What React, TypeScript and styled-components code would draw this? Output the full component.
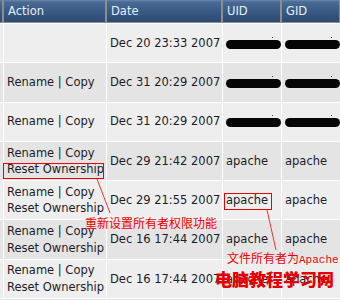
import React from "react";
import styled, { createGlobalStyle } from "styled-components";

const Global = createGlobalStyle`
  html, body { margin: 0; padding: 0; background: #ffffff; }
  body { width: 340px; height: 300px; overflow: hidden; }
`;

const Page = styled.div`
  position: relative;
  width: 340px;
  height: 300px;
  overflow: hidden;
  background: #ffffff;
  font-family: "DejaVu Sans", Verdana, sans-serif;
`;

const Table = styled.table`
  border-collapse: separate;
  border-spacing: 0;
  table-layout: fixed;
  width: 340px;
  font-size: 11.5px;
`;

const HeadCell = styled.th<{ $edge?: boolean }>`
  height: 22px;
  padding: 0 0 0 4px;
  text-align: left;
  font-weight: normal;
  color: #e6eef8;
  background: linear-gradient(#6a88ad 0px, #4a6b94 2px, #3b5c86 45%, #2c4b73 100%);
  border: 1px solid #8d8d8d;
  border-top: none;
  border-left: ${(p) => (p.$edge ? "none" : "1px solid #8d8d8d")};
  white-space: nowrap;
  overflow: hidden;
`;

const Row = styled.tr<{ $alt: boolean }>`
  background: ${(p) => (p.$alt ? "#e4e4e4" : "#eeeeee")};
`;

const Cell = styled.td<{ $edge?: boolean }>`
  height: 38.3px;
  padding: 0 0 0 3px;
  border-top: 1px solid #ffffff;
  border-left: ${(p) => (p.$edge ? "none" : "1px solid #ffffff")};
  color: #1c1c28;
  line-height: 16.5px;
  white-space: nowrap;
  overflow: hidden;
  vertical-align: middle;
`;

const Blob = styled.div`
  position: relative;
  width: 55px;
  height: 9px;
  border-radius: 5px;
  background: #050505;
  margin-top: 2px;
  &::after {
    content: "";
    position: absolute;
    right: 8px;
    top: -3px;
    width: 1px;
    height: 1px;
    background: #6a1a6a;
  }
`;

const Overlay = styled.svg`
  position: absolute;
  left: 0;
  top: 0;
  pointer-events: none;
`;

const Note = styled.div<{ $x: number; $y: number }>`
  position: absolute;
  left: ${(p) => p.$x}px;
  top: ${(p) => p.$y}px;
  color: #ee0000;
  font-size: 12px;
  line-height: 14px;
  white-space: nowrap;
  font-family: "Noto Sans CJK SC", sans-serif;
`;

const Mono = styled.span`
  font-family: "Liberation Mono", monospace;
  font-size: 11px;
`;

const Watermark = styled.div`
  position: absolute;
  left: 215px;
  top: 268px;
  color: #e60000;
  font-size: 17px;
  line-height: 22px;
  font-weight: 900;
  white-space: nowrap;
  font-family: "Noto Sans CJK SC", sans-serif;
`;

type RowData = { actions: number; date: string; owner: "blob" | "apache" | "none" };

const rows: RowData[] = [
  { actions: 0, date: "Dec 20 23:33 2007", owner: "blob" },
  { actions: 1, date: "Dec 31 20:29 2007", owner: "blob" },
  { actions: 1, date: "Dec 31 20:29 2007", owner: "blob" },
  { actions: 2, date: "Dec 29 21:42 2007", owner: "apache" },
  { actions: 2, date: "Dec 29 21:55 2007", owner: "apache" },
  { actions: 2, date: "Dec 16 17:44 2007", owner: "apache" },
  { actions: 2, date: "Dec 16 17:44 2007", owner: "apache" },
  { actions: 0, date: "", owner: "none" },
];

function Owner({ kind }: { kind: RowData["owner"] }) {
  if (kind === "blob") return <Blob />;
  if (kind === "apache") return <>apache</>;
  return null;
}

export default function App() {
  return (
    <Page>
      <Global />
      <Table>
        <colgroup>
          <col style={{ width: 3 }} />
          <col style={{ width: 103 }} />
          <col style={{ width: 116 }} />
          <col style={{ width: 59 }} />
          <col style={{ width: 59 }} />
        </colgroup>
        <thead>
          <tr>
            <HeadCell $edge />
            <HeadCell>Action</HeadCell>
            <HeadCell>Date</HeadCell>
            <HeadCell>UID</HeadCell>
            <HeadCell>GID</HeadCell>
          </tr>
        </thead>
        <tbody>
          {rows.map((r, i) => (
            <Row key={i} $alt={i % 2 === 1}>
              <Cell $edge />
              <Cell>
                {r.actions >= 1 && <div>Rename | Copy</div>}
                {r.actions >= 2 && <div>Reset Ownership</div>}
              </Cell>
              <Cell>{r.date}</Cell>
              <Cell>
                <Owner kind={r.owner} />
              </Cell>
              <Cell>
                <Owner kind={r.owner} />
              </Cell>
            </Row>
          ))}
        </tbody>
      </Table>
      <Overlay width="340" height="300" viewBox="0 0 340 300">
        <rect x="3.5" y="163.5" width="100" height="15" fill="none" stroke="#ee0000" strokeWidth="1" />
        <line x1="97" y1="179" x2="110" y2="213" stroke="#ee3333" strokeWidth="1" />
        <rect x="224.5" y="193.5" width="47" height="16" fill="none" stroke="#ee0000" strokeWidth="1" />
        <line x1="267" y1="210" x2="276" y2="250" stroke="#ee3333" strokeWidth="1" />
      </Overlay>
      <Note $x={85} $y={216}>重新设置所有者权限功能</Note>
      <Note $x={227} $y={251}>
        文件所有者为<Mono>Apache</Mono>
      </Note>
      <Watermark>电脑教程学习网</Watermark>
    </Page>
  );
}
